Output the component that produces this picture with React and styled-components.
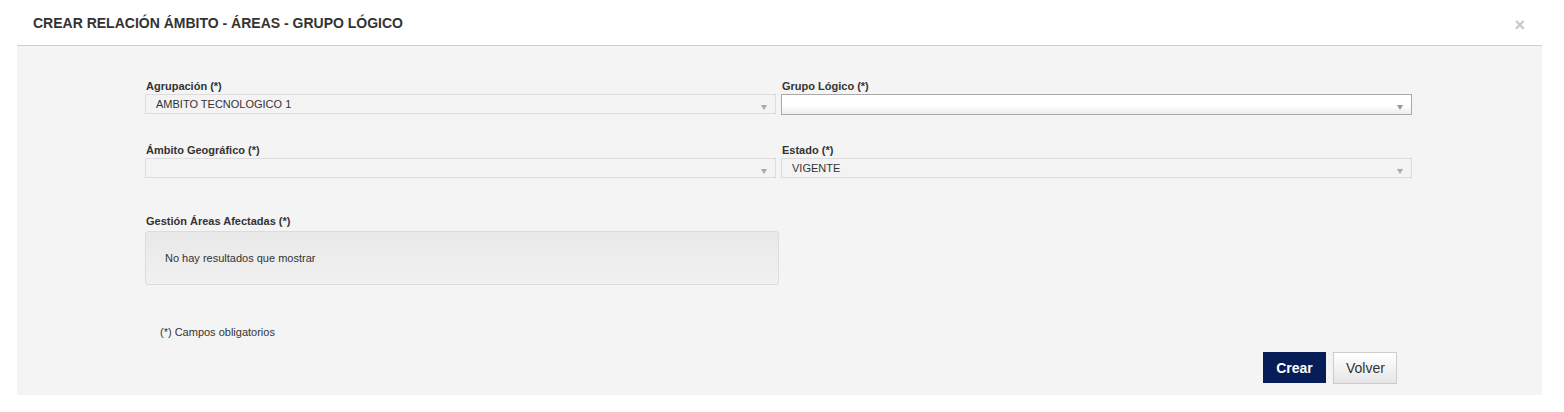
import styled, { createGlobalStyle } from 'styled-components';

const GlobalStyle = createGlobalStyle`
  html, body {
    margin: 0;
    padding: 0;
    background: #ffffff;
    font-family: "Liberation Sans", Arial, sans-serif;
    color: #333;
  }
`;

const Modal = styled.div`
  margin-left: 17px;
  width: 1525px;
`;

const Header = styled.div`
  height: 46px;
  display: flex;
  align-items: center;
  justify-content: space-between;
  padding: 0 16px;
  box-sizing: border-box;
  border-bottom: 1px solid #cfcfcf;
`;

const Title = styled.h3`
  margin: 0;
  font-size: 14px;
  font-weight: bold;
  color: #333;
`;

const Close = styled.span`
  font-size: 18px;
  font-weight: bold;
  color: #c8c8c8;
  margin-top: 6px;
  margin-right: 1px;
  cursor: pointer;
`;

const Body = styled.div`
  background: #f4f4f4;
  padding: 34px 130px 11px 128px;
`;

const Grid = styled.div`
  display: grid;
  grid-template-columns: 631px 631px;
  column-gap: 5px;
  row-gap: 30px;
`;

const Field = styled.div`
  display: flex;
  flex-direction: column;
`;

const Label = styled.label`
  font-size: 11px;
  line-height: 13px;
  font-weight: bold;
  color: #333;
  margin-bottom: 1px;
  padding-left: 1px;
`;

const Select = styled.div`
  height: ${p => (p.$active ? '21px' : '20px')};
  margin-bottom: ${p => (p.$active ? '-1px' : '0')};
  box-sizing: border-box;
  display: flex;
  justify-content: space-between;
  align-items: center;
  padding: 0 8px 0 10px;
  font-size: 11px;
  color: #333;
  border: 1px solid ${p => (p.$active ? '#a9a9a9' : '#dcdcdc')};
  background: ${p => (p.$active ? 'linear-gradient(#ffffff 0%, #ffffff 55%, #eeeeee 100%)' : '#f3f3f3')};
`;

const Arrow = styled.span`
  width: 0;
  height: 0;
  border-left: 3px solid transparent;
  border-right: 3px solid transparent;
  border-top: 5px solid ${p => (p.$active ? '#999' : '#aaa')};
  margin-top: 6px;
`;

const AreaLabel = styled(Label)`
  margin-top: 37px;
  margin-bottom: 3px;
`;

const ResultBox = styled.div`
  width: 634px;
  height: 54px;
  box-sizing: border-box;
  border: 1px solid #dcdcdc;
  border-radius: 3px;
  background: linear-gradient(#e8e8e8, #f1f1f1);
  display: flex;
  align-items: center;
  padding-left: 19px;
  font-size: 11px;
  color: #333;
`;

const Note = styled.p`
  margin: 41px 0 0 15px;
  font-size: 11px;
  line-height: 13px;
  color: #333;
`;

const Actions = styled.div`
  display: flex;
  justify-content: flex-end;
  gap: 7px;
  margin-top: 13px;
  padding-right: 15px;
`;

const Button = styled.button`
  height: 32px;
  box-sizing: border-box;
  font-family: "Liberation Sans", Arial, sans-serif;
  font-size: 14px;
  cursor: pointer;
  padding: 0 12px;
  ${p =>
    p.$primary
      ? `
    background: #061d57;
    border: 1px solid #061d57;
    color: #fff;
    font-weight: bold;
    width: 63px;
    height: 31px;
  `
      : `
    background: linear-gradient(#ffffff, #e6e6e6);
    border: 1px solid #cccccc;
    color: #333;
    width: 64px;
  `}
`;

function SelectBox({ value, active }) {
  return (
    <Select $active={active}>
      <span>{value}</span>
      <Arrow $active={active} />
    </Select>
  );
}

export default function App() {
  return (
    <>
      <GlobalStyle />
      <Modal>
        <Header>
          <Title>CREAR RELACIÓN ÁMBITO - ÁREAS - GRUPO LÓGICO</Title>
          <Close>×</Close>
        </Header>
        <Body>
          <Grid>
            <Field>
              <Label>Agrupación (*)</Label>
              <SelectBox value="AMBITO TECNOLOGICO 1" />
            </Field>
            <Field>
              <Label>Grupo Lógico (*)</Label>
              <SelectBox value="" active />
            </Field>
            <Field>
              <Label>Ámbito Geográfico (*)</Label>
              <SelectBox value="" />
            </Field>
            <Field>
              <Label>Estado (*)</Label>
              <SelectBox value="VIGENTE" />
            </Field>
          </Grid>
          <AreaLabel as="div">Gestión Áreas Afectadas (*)</AreaLabel>
          <ResultBox>No hay resultados que mostrar</ResultBox>
          <Note>(*) Campos obligatorios</Note>
          <Actions>
            <Button $primary>Crear</Button>
            <Button>Volver</Button>
          </Actions>
        </Body>
      </Modal>
    </>
  );
}
